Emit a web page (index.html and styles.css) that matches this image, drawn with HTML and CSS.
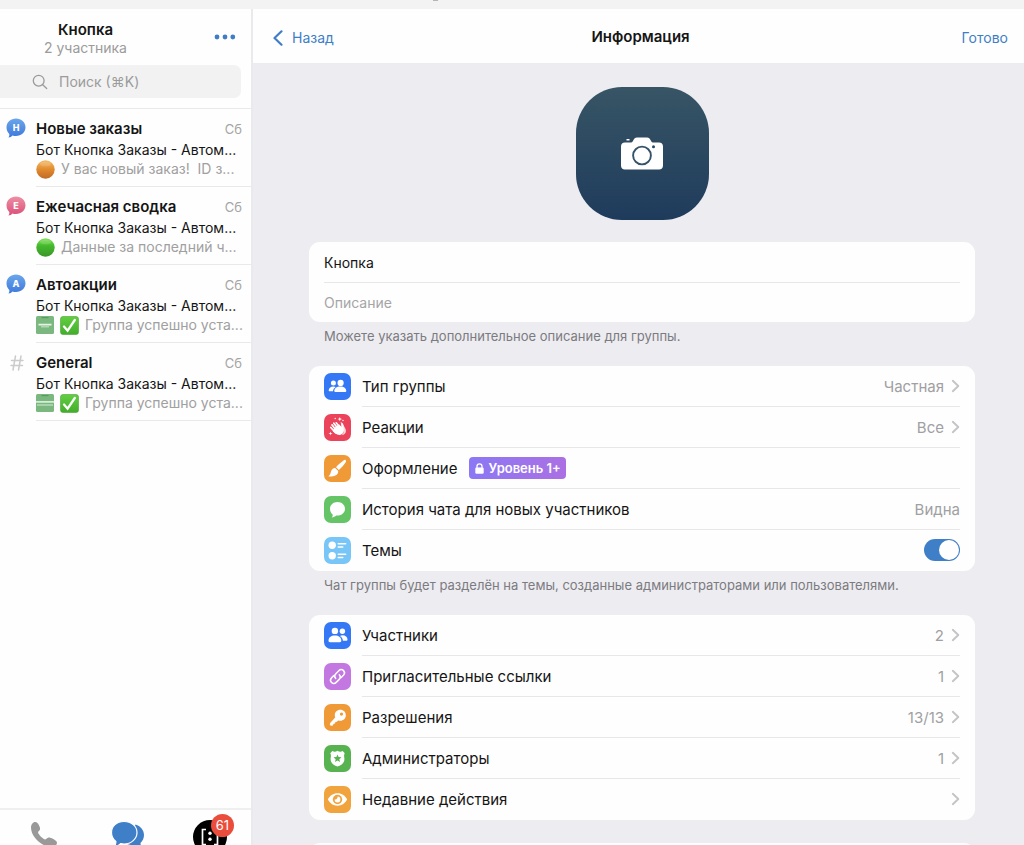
FILE: index.html
```html
<!DOCTYPE html>
<html lang="ru">
<head>
<meta charset="utf-8">
<meta name="viewport" content="width=device-width, initial-scale=1">
<title>Информация о группе</title>
<link rel="stylesheet" href="styles.css">
</head>
<body>
<svg class="defs" aria-hidden="true">
  <defs>
    <linearGradient id="blueBubble" x1="0" y1="0" x2="0" y2="1"><stop offset="0" stop-color="#6ba6ea"/><stop offset="1" stop-color="#3f78dc"/></linearGradient>
    <linearGradient id="roseBubble" x1="0" y1="0" x2="0" y2="1"><stop offset="0" stop-color="#ee8fa4"/><stop offset="1" stop-color="#da4f78"/></linearGradient>
    <linearGradient id="orangeBall" x1="0" y1="0" x2="0" y2="1"><stop offset="0" stop-color="#f5bb66"/><stop offset=".5" stop-color="#e18a2e"/><stop offset="1" stop-color="#bf6b26"/></linearGradient>
    <linearGradient id="greenBall" x1="0" y1="0" x2="0" y2="1"><stop offset="0" stop-color="#86e35c"/><stop offset=".4" stop-color="#44ba2c"/><stop offset="1" stop-color="#3a9628"/></linearGradient>
    <linearGradient id="greenBox" x1="0" y1="0" x2="0" y2="1"><stop offset="0" stop-color="#62cf42"/><stop offset="1" stop-color="#43ad2c"/></linearGradient>
    <symbol id="bubble" viewBox="0 0 20 20"><path d="M10 .5c5.300 0 9.500 3.800 9.500 8.700s-4.200 8.800-9.500 8.800c-1.300 0-2.400-.2-3.500-.6-1 1-2.400 2-4.100 2.100.8-1 1.100-2.200.9-3.600C1.500 14.300.5 12 .5 9.200.5 4.300 4.700.5 10 .5z"/></symbol>
    <symbol id="ball" viewBox="0 0 19 19"><circle cx="9.500" cy="9.500" r="9.200"/><ellipse cx="9.500" cy="4" rx="5.500" ry="2.300" fill="#fff" opacity=".15"/></symbol>
    <symbol id="check" viewBox="0 0 19 19"><rect x=".5" y=".5" width="18" height="18" rx="2.500" fill="url(#greenBox)" stroke="#4aa336" stroke-width=".6"/><path d="M4 10.500l3.600 4.200L14.800 4" fill="none" stroke="#fff" stroke-width="2.300" stroke-linecap="round"/></symbol>
    <symbol id="next" viewBox="0 0 9 14"><path d="M1.800 1.800L7.300 7l-5.500 5.200" fill="none" stroke="#c4c4c6" stroke-width="1.900" stroke-linecap="round" stroke-linejoin="round"/></symbol>
  </defs>
</svg>

<div class="app">
  <div class="titlebar"><span class="titlebar-mark"></span></div>

  <aside class="sidebar">
    <header class="side-head">
      <div class="group">
        <h2 class="group-name">Кнопка</h2>
        <p class="group-count">2 участника</p>
      </div>
      <button class="more" type="button" aria-label="Ещё">
        <svg width="22" height="6" viewBox="0 0 22 6" fill="#3f7ec6"><circle cx="3" cy="3" r="2.400"/><circle cx="11" cy="3" r="2.400"/><circle cx="18.800" cy="3" r="2.400"/></svg>
      </button>
    </header>
    <label class="search">
      <svg width="16" height="16" viewBox="0 0 16 16" fill="none" stroke="#9b9b9b" stroke-width="1.300" stroke-linecap="round"><circle cx="6.700" cy="6.700" r="5.400"/><path d="M10.700 10.700l4 3.800"/></svg>
      <input type="search" placeholder="Поиск (⌘K)" aria-label="Поиск">
    </label>

    <nav class="topics" aria-label="Темы группы">
      <a class="topic" href="#orders">
        <span class="topic-icon"><svg width="20" height="20" fill="url(#blueBubble)"><use href="#bubble"/></svg><span class="letter">Н</span></span>
        <span class="topic-body">
          <span class="topic-top"><strong>Новые заказы</strong><time>Сб</time></span>
          <span class="sender">Бот Кнопка Заказы - Автом...</span>
          <span class="preview"><svg width="19" height="19" fill="url(#orangeBall)"><use href="#ball"/></svg><span>У вас новый заказ!&nbsp; ID з...</span></span>
        </span>
      </a>
      <a class="topic" href="#hourly">
        <span class="topic-icon"><svg width="20" height="20" fill="url(#roseBubble)"><use href="#bubble"/></svg><span class="letter">Е</span></span>
        <span class="topic-body">
          <span class="topic-top"><strong>Ежечасная сводка</strong><time>Сб</time></span>
          <span class="sender">Бот Кнопка Заказы - Автом...</span>
          <span class="preview"><svg width="19" height="19" fill="url(#greenBall)"><use href="#ball"/></svg><span>Данные за последний ч...</span></span>
        </span>
      </a>
      <a class="topic" href="#auto">
        <span class="topic-icon"><svg width="20" height="20" fill="url(#blueBubble)"><use href="#bubble"/></svg><span class="letter">А</span></span>
        <span class="topic-body">
          <span class="topic-top"><strong>Автоакции</strong><time>Сб</time></span>
          <span class="sender">Бот Кнопка Заказы - Автом...</span>
          <span class="preview"><svg width="18" height="18" viewBox="0 0 18 18"><rect width="18" height="18" rx="1.500" fill="#7bb87f"/><path d="M5.500 1h7v1.200h-7z" fill="#5a9b61"/><path d="M2.500 7.800h13v1.600h-13zM5 10.500h8v.8H5z" fill="#e5f3e5"/></svg><svg width="19" height="19"><use href="#check"/></svg><span>Группа успешно уста...</span></span>
        </span>
      </a>
      <a class="topic" href="#general">
        <span class="topic-icon hash"><svg width="14" height="16" viewBox="0 0 14 16" fill="none" stroke="#cbcbcb" stroke-width="1.500" stroke-linecap="round"><path d="M5.500 1L3 15M11 1L8.500 15M1.500 5.500h11.500M1 10.500h11.500"/></svg></span>
        <span class="topic-body">
          <span class="topic-top"><strong>General</strong><time>Сб</time></span>
          <span class="sender">Бот Кнопка Заказы - Автом...</span>
          <span class="preview"><svg width="18" height="18" viewBox="0 0 18 18"><rect width="18" height="18" rx="1.500" fill="#7bb87f"/><path d="M5.500 1h7v1.200h-7z" fill="#5a9b61"/><path d="M0 7h18v1.700H0zM1 10.500h16v1H1z" fill="#d5ecd6"/></svg><svg width="19" height="19"><use href="#check"/></svg><span>Группа успешно уста...</span></span>
        </span>
      </a>
    </nav>

    <nav class="tabs" aria-label="Разделы">
      <button type="button" aria-label="Звонки"><svg width="28" height="28" viewBox="0 0 28 28" fill="#999"><path d="M1 7.500C1 4.500 2.800 2 5.300 2c1.600 0 2.700 1.200 3.900 3.800 1.300 2.800 1.200 3.800-.6 5.500-.7.700-.6 1.500 0 2.400 1.400 2.200 3 3.800 5.200 5.200.9.600 1.700.7 2.400.1 1.800-1.700 2.900-2 5.500-.7 3 1.500 5.300 2.700 5.300 4.500 0 2.200-2.500 4.200-5.500 4.200C12 27 1 17 1 7.500z"/></svg></button>
      <button type="button" class="chats" aria-label="Чаты"><svg width="34" height="30" viewBox="0 0 34 30" fill="#3f7fc7"><path d="M24.500 4.500C29.500 6 33 10 33 15c0 3.200-1.300 6-3.500 8 0 2 .8 3.500 1.800 4.500-2.500 0-4.800-1-6.500-2.400-3 .4-6-.1-8.800-1.100z"/><path d="M13 1.500C20.300 1.500 26 6.200 26 12.500S20.300 24 13 24c-1.200 0-2.300-.1-3.400-.4C8 25.200 5.500 26.500 3 26.500c1.300-1.400 2-3 1.900-5C2 19.300.5 16.200.5 12.500.5 6.200 5.700 1.500 13 1.500z" stroke="#fff" stroke-width="1.200"/></svg></button>
      <button type="button" class="profile" aria-label="Профиль, 61 новое">
        <svg width="34" height="34" viewBox="0 0 34 34"><circle cx="17" cy="17" r="17" fill="#000"/><path d="M13 9.500H9.500v15H13M21 9.500h3.500v15H21" fill="none" stroke="#fff" stroke-width="1.700"/><circle cx="17" cy="13.200" r="1.700" fill="#fff"/><circle cx="17" cy="19.200" r="1.700" fill="#fff"/></svg>
        <span class="badge">61</span>
      </button>
    </nav>
  </aside>

  <main class="main">
    <header class="main-head">
      <button class="link back" type="button"><svg width="10" height="16" viewBox="0 0 10 16" fill="none" stroke="#3f7ec6" stroke-width="2.200" stroke-linecap="round" stroke-linejoin="round"><path d="M8.500 1.300L1.500 8l7 6.700"/></svg>Назад</button>
      <h1>Информация</h1>
      <button class="link done" type="button">Готово</button>
    </header>

    <div class="content">
      <button class="photo" type="button" aria-label="Выбрать фотографию">
        <svg width="42" height="33" viewBox="0 0 42 33"><path d="M5.500 2h3v1.500h-3z" fill="#fff"/><path d="M4 5.500h6.200c1 0 1.300-.7 2-2C13.300 1.500 14 .5 16 .5h10c2 0 2.700 1 3.800 3 .7 1.300 1 2 2 2H38c2.500 0 4 1.500 4 4v19c0 2.500-1.500 4-4 4H4c-2.500 0-4-1.500-4-4v-19c0-2.500 1.500-4 4-4z" fill="#fff"/><circle cx="21" cy="18.500" r="8.900" fill="none" stroke="#34526a" stroke-width="1.900"/><circle cx="32.500" cy="9.700" r="1.500" fill="#28485e"/></svg>
      </button>

      <section class="card fields">
        <input type="text" value="Кнопка" aria-label="Название группы">
        <input type="text" placeholder="Описание" aria-label="Описание">
      </section>
      <p class="note">Можете указать дополнительное описание для группы.</p>

      <section class="card rows">
        <button class="row" type="button"><span class="tile blue"><svg viewBox="0 0 27 27"><circle cx="9.400" cy="9.900" r="2.500"/><path d="M4.700 17.800c0-2.700 1.700-4.300 4.700-4.300.9 0 1.700.2 2.300.5-1.700 1.100-2.600 2.500-2.700 4.200H5.300c-.4 0-.6-.1-.6-.4z"/><circle cx="16.600" cy="9.900" r="3.100"/><path d="M10.300 18.100c0-2.900 2.300-4.700 6-4.700s6 1.800 6 4.700c0 .6-.4.900-1 .9h-10c-.6 0-1-.3-1-.9z"/></svg></span><span class="line"><span>Тип группы</span><span class="value">Частная</span><svg class="next"><use href="#next"/></svg></span></button>
        <button class="row" type="button"><span class="tile red"><svg viewBox="0 0 27 27"><path d="M16.500 8.400c.8-.4 1.400-.1 1.800.7l3 5.500c1.700 3.500-.3 6.200-3.600 6.700 2.200-2 2.700-4 1.400-6.600z" opacity=".8"/><path d="M9.800 9.200l4.500 5.800M8 10.900l4.200 5.300M6.800 13.500l4.500 5M12.200 8.800l4.500 5.500" fill="none" stroke="#fff" stroke-width="1.700" stroke-linecap="round"/><path d="M10 14.200l5-4 2.500 2.500-.3-2.500c0-1.200 1.700-1.200 2 0l.7 5.200c.3 3-1.800 5.500-4.800 5.500-2.500 0-4.500-1.400-6.400-3.800z"/><path d="M15.800 2.900l.6 1.600 1.600.6-1.600.6-.6 1.600-.6-1.600-1.600-.6 1.600-.6zM6.500 17.600l.5 1.500 1.500.5-1.500.5-.5 1.500-.5-1.500-1.500-.5 1.500-.5z"/><circle cx="11.200" cy="4.500" r=".7"/><circle cx="19" cy="6.500" r=".7"/></svg></span><span class="line"><span>Реакции</span><span class="value">Все</span><svg class="next"><use href="#next"/></svg></span></button>
        <button class="row" type="button"><span class="tile orange"><svg viewBox="0 0 27 27"><path d="M21.700 5.200c.7.700.4 1.500-.2 2.400-1.800 2.700-4.100 5.500-6.600 7.500l-2.900-2.900c2.100-2.500 5.300-4.900 7.500-6.700.8-.6 1.500-1 2.200-.3z"/><path d="M11.200 12.900l3 3c.2 3.700-3 5.600-8.900 5.700-.7 0-.9-.4-.4-.8 1.800-1.200 1.500-2.900 2.400-5 .8-1.900 2.100-3 3.900-2.900z"/></svg></span><span class="line"><span>Оформление</span><span class="level"><svg width="9" height="11" viewBox="0 0 9 11"><path d="M2 5V3.200C2 1.700 3 .8 4.500.8S7 1.700 7 3.200V5" fill="none" stroke="#fff" stroke-width="1.300"/><rect x=".3" y="4.500" width="8.400" height="6.200" rx="1.200" fill="#fff"/></svg>Уровень 1+</span></span></button>
        <button class="row" type="button"><span class="tile green"><svg viewBox="0 0 27 27"><path d="M13.500 6c4.300 0 7.500 2.900 7.500 6.800s-3.200 6.800-7.500 6.800h-1.200c-1.200 1-2.800 1.900-4.600 1.900.8-.8 1.100-1.800 1-3C7 17.300 6 15.200 6 12.800 6 8.900 9.200 6 13.500 6z"/></svg></span><span class="line"><span>История чата для новых участников</span><span class="value">Видна</span></span></button>
        <label class="row"><span class="tile sky"><svg viewBox="0 0 27 27"><circle cx="8.200" cy="8.300" r="3.700"/><circle cx="8.200" cy="18.800" r="3.700"/><g fill="none" stroke="#fff" stroke-width="1.400" stroke-linecap="round"><path d="M14.200 6.700h7.500M14.200 10h4.600M14.200 17.200h7.500M14.200 20.500h4.600"/></g></svg></span><span class="line"><span>Темы</span><input class="switch" type="checkbox" role="switch" checked></span></label>
      </section>
      <p class="note">Чат группы будет разделён на темы, созданные администраторами или пользователями.</p>

      <section class="card rows">
        <button class="row" type="button"><span class="tile blue"><svg viewBox="0 0 27 27"><circle cx="10.900" cy="8.900" r="3.200"/><circle cx="18.400" cy="9.200" r="2.700"/><path d="M4.500 18.500c0-3 2.600-5 6.400-5s6.400 2 6.400 5c0 1-.4 1.700-1.500 1.700H6c-1.100 0-1.500-.7-1.500-1.700z"/><path d="M16 13.900c.7-.4 1.500-.6 2.500-.6 3 0 5 1.700 5 4.200 0 .9-.5 1.300-1.300 1.300h-3.300c0-2-.9-3.700-2.900-4.900z"/></svg></span><span class="line"><span>Участники</span><span class="value">2</span><svg class="next"><use href="#next"/></svg></span></button>
        <button class="row" type="button"><span class="tile purple"><svg viewBox="0 0 27 27"><g fill="none" stroke="#fff" stroke-width="1.500" stroke-linecap="round"><path d="M11.700 15.500c-1.400-1.600-1.400-3.300.1-4.800l3-3c1.500-1.500 3.300-1.500 4.700-.1s1.300 3.200-.1 4.700l-2.200 2.200"/><path d="M15.300 11.700c1.400 1.500 1.400 3.200-.1 4.700l-3 3c-1.500 1.500-3.300 1.500-4.700.1s-1.300-3.200.1-4.700l2.200-2.200"/></g></svg></span><span class="line"><span>Пригласительные ссылки</span><span class="value">1</span><svg class="next"><use href="#next"/></svg></span></button>
        <button class="row" type="button"><span class="tile orange"><svg viewBox="0 0 27 27"><path fill-rule="evenodd" d="M16.300 5.800c3.200 0 5.500 2.300 5.500 5.500s-2.300 5.500-5.500 5.500c-.8 0-1.500-.1-2.100-.4l-1.300 1.300-1.600.2-.2 1.700-1.500.2-.7 1.400c-.5.600-1.300.6-2.300.4-.5-.1-.7-.4-.7-.9 0-1.100.1-1.700.7-2.300l4.600-5c-.3-.7-.4-1.300-.4-2.100 0-3.200 2.300-5.500 5.500-5.500zm1.200 2.700a1.600 1.600 0 100 3.200 1.600 1.600 0 000-3.200z"/></svg></span><span class="line"><span>Разрешения</span><span class="value">13/13</span><svg class="next"><use href="#next"/></svg></span></button>
        <button class="row" type="button"><span class="tile darkgreen"><svg viewBox="0 0 27 27"><path d="M8.300 6c1.700 1 3.500.9 5.200-.2 1.700 1.100 3.500 1.200 5.200.2l2 2.200c-.8 1.400-.7 2.800-.4 4.500.7 4-1.800 7.200-6.800 8.900-5-1.700-7.500-4.900-6.800-8.900.3-1.700.4-3.100-.4-4.500z"/><path fill="#57b350" d="M13.500 9.400l1.100 2.700 2.900.2-2.200 1.900.7 2.800-2.500-1.500-2.500 1.500.7-2.800-2.200-1.900 2.900-.2z"/></svg></span><span class="line"><span>Администраторы</span><span class="value">1</span><svg class="next"><use href="#next"/></svg></span></button>
        <button class="row" type="button"><span class="tile amber"><svg viewBox="0 0 27 27"><path d="M3.900 13.500c1.800-3.700 5.300-6.200 9.600-6.200s7.800 2.500 9.600 6.200c-1.800 3.700-5.300 6.200-9.600 6.200s-7.800-2.500-9.600-6.200z"/><circle cx="13.500" cy="13.500" r="4.700" fill="#f1a33d"/><path d="M13.500 10.600a2.900 2.900 0 11-2.900 2.900c1.800.4 3.300-1 2.900-2.900z"/></svg></span><span class="line"><span>Недавние действия</span><svg class="next"><use href="#next"/></svg></span></button>
      </section>
      <section class="card upcoming"></section>
    </div>
  </main>
</div>
</body>
</html>
```

FILE: styles.css
```css
* { box-sizing: border-box; }
body, h1, h2, p { margin: 0; }
body, button, input { font-family: Inter, "Noto Sans", sans-serif; font-size: 15px; color: #151515; }
button, input { border: 0; padding: 0; background: none; }
button { cursor: pointer; }
svg { display: block; flex: none; }
.defs { position: absolute; width: 0; height: 0; }

.app {
  display: grid;
  grid-template: 9px minmax(0, 1fr) / 253px minmax(0, 1fr);
  height: 100vh;
  overflow: hidden;
  background: #edecf1;
}
.titlebar { grid-column: 1 / -1; padding-left: 433px; background: #f3f3f3; }
.titlebar-mark { display: block; width: 5px; height: 1px; background: #b5b5b5; }

.sidebar { display: flex; flex-direction: column; min-height: 0; background: #fefefe; border-right: 2px solid #e9e9ee; }
.side-head { display: flex; align-items: center; justify-content: space-between; height: 56px; padding: 0 15px 0 0; }
.group { width: 171px; text-align: center; padding-top: 3px; }
.group-name { font-size: 15px; line-height: 19px; font-weight: 600; }
.group-count { font-size: 14px; line-height: 18px; color: #9b9b9b; }
.search { display: flex; align-items: center; gap: 11px; height: 33px; margin-right: 10px; padding-left: 32px; background: #f2f2f2; border-radius: 0 7px 7px 0; }
.search input { flex: 1; min-width: 0; outline: 0; font-size: 14px; }
.search input::placeholder { color: #9b9b9b; opacity: 1; }

.topics { flex: 1; margin-top: 10px; border-top: 1px solid #e9e9eb; }
.topic { display: flex; color: inherit; text-decoration: none; }
.topic-icon { position: relative; width: 36px; padding: 9px 0 0 6px; }
.hash { padding: 12px 0 0 10px; }
.letter { position: absolute; top: 9px; left: 6px; width: 20px; text-align: center; font-size: 9px; line-height: 19px; font-weight: 800; color: #fff; }
.topic-body { flex: 1; min-width: 0; height: 78px; padding: 10px 0 0; border-bottom: 1px solid #e9e9eb; white-space: nowrap; overflow: hidden; }
.topic-top { display: flex; justify-content: space-between; padding-right: 9px; line-height: 20px; }
.topic-top strong { font-size: 15px; font-weight: 600; }
.topic-top time { font-size: 13px; color: #a5a5a5; }
.sender { display: block; font-size: 14px; line-height: 22px; }
.preview { display: flex; align-items: center; gap: 6px; font-size: 14px; line-height: 16px; height: 16px; color: #a0a0a0; }

.tabs { display: flex; justify-content: space-between; align-items: flex-start; height: 37px; padding: 10px 24px 0 30px; border-top: 2px solid #efeff0; }
.chats { padding-left: 4px; }
.profile { position: relative; }
.badge { position: absolute; top: -6px; right: -7px; min-width: 23px; height: 23px; border-radius: 12px; background: #eb4d3d; color: #fff; font-size: 13px; line-height: 23px; text-align: center; }

.main { display: flex; flex-direction: column; min-width: 0; min-height: 0; }
.main-head { display: grid; grid-template-columns: 1fr auto 1fr; align-items: center; height: 55px; flex: none; padding: 2px 16px 0 20px; background: #fefefe; border-bottom: 1px solid #ececf0; }
.main-head h1 { font-size: 15px; line-height: 20px; font-weight: 600; }
.link { padding-top: 2px; color: #3f7ec6; font-size: 14px; line-height: 20px; }
.back { display: flex; align-items: center; gap: 9px; justify-self: start; }
.done { justify-self: end; }

.content { flex: 1; min-height: 0; overflow: hidden; padding: 23px 49px 0 56px; }
.photo { display: grid; place-items: center; width: 133px; height: 133px; margin: 0 auto 22px; border-radius: 46px; background: linear-gradient(#375565, #1f3b5c); }
.card { background: #fefefe; border-radius: 11px; }
.fields { padding: 0 15px; }
.fields input { display: block; width: 100%; height: 40px; font-size: 14px; outline: 0; }
.fields input + input { border-top: 1px solid #e7e7e9; }
.fields input::placeholder { color: #a5a5a7; opacity: 1; }
.note { padding: 5px 15px 0; margin-bottom: 21px; font-size: 13px; line-height: 18px; color: #7b7b80; }
.rows { padding: 0 15px; }
.row { display: flex; align-items: center; gap: 11px; width: 100%; height: 41px; text-align: left; cursor: pointer; }
.tile { width: 27px; height: 27px; border-radius: 7px; flex: none; }
.tile svg { width: 27px; height: 27px; fill: #fff; }
.line { display: flex; align-items: center; flex: 1; min-width: 0; height: 41px; border-bottom: 1px solid #e7e7e9; }
.row:last-child .line { border-bottom-color: transparent; }
.value { margin-left: auto; color: #a0a0a2; }
.next { width: 9px; height: 14px; margin-left: 7px; }
.line > span:first-child + .next { margin-left: auto; }
.level { display: flex; align-items: center; gap: 4px; height: 22px; margin-left: 12px; padding: 0 5px 0 6px; border-radius: 4px; background: linear-gradient(90deg, #8b78f5, #ab70e3); color: #fff; font-size: 13px; font-weight: 600; }
.switch { appearance: none; display: flex; align-items: center; justify-content: flex-end; width: 36px; height: 22px; margin: 0 0 0 auto; padding: 1px; border-radius: 11px; background: #3f7fc7; cursor: pointer; }
.switch::before { content: ""; width: 20px; height: 20px; border-radius: 50%; background: #fff; }
.switch:not(:checked) { justify-content: flex-start; background: #d5d5d9; }
.blue { background: #3478f6; }
.red { background: #eb445a; }
.orange { background: #ef9a37; }
.green { background: #65c466; }
.sky { background: #78c5f7; }
.purple { background: #c377e0; }
.darkgreen { background: #57b350; }
.amber { background: #f1a33d; }
.upcoming { height: 80px; margin-top: 23px; }
```
